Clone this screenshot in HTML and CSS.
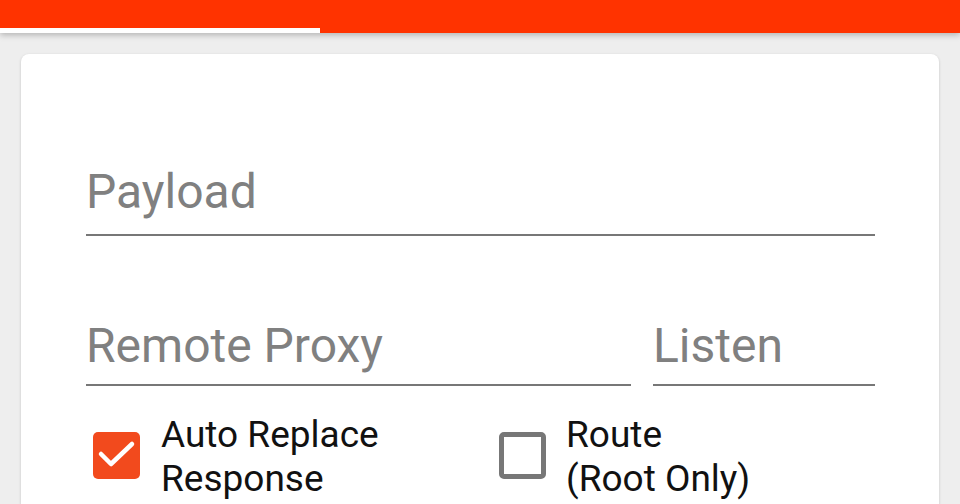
FILE: index.html
```html
<!DOCTYPE html>
<html lang="en">
<head>
  <meta charset="UTF-8" />
  <meta name="viewport" content="width=device-width, initial-scale=1.0"/>
  <title>Proxy Settings</title>
  <link rel="stylesheet" href="styles.css">
</head>
<body>
  <div class="appbar">
    <div class="tab-indicator"></div>
  </div>

  <div class="card">
    <div class="field field-payload">Payload</div>

    <div class="field-row">
      <div class="field field-small">Remote Proxy</div>
      <div class="field field-small">Listen</div>
    </div>

    <div class="checks">
      <div class="check">
        <span class="box checked">
          <svg width="47" height="47" viewBox="0 0 47 47">
            <path d="M8 22 L18 32 L39 12" fill="none" stroke="#fff" stroke-width="4.5" stroke-linecap="round" stroke-linejoin="round"/>
          </svg>
        </span>
        <span class="check-label">Auto Replace<br>Response</span>
      </div>
      <div class="check">
        <span class="box"></span>
        <span class="check-label">Route<br>(Root Only)</span>
      </div>
    </div>
  </div>
</body>
</html>
```

FILE: styles.css
```css
body {
  margin: 0;
  height: 504px;
  background: #eeeeee;
  font-family: Roboto, 'Noto Sans', sans-serif;
  overflow: hidden;
}
.appbar {
  height: 33px;
  background: #ff3300;
  display: flex;
  align-items: flex-end;
  box-shadow: 0 2px 6px rgba(0, 0, 0, 0.25);
}
.tab-indicator {
  width: 320px;
  height: 5px;
  background: #fff;
}
.card {
  margin: 21px 21px 0;
  height: 450px;
  box-sizing: border-box;
  background: #fff;
  border-radius: 8px 8px 0 0;
  box-shadow: 0 1px 3px rgba(0, 0, 0, 0.18);
  padding: 110px 64px 0 65px;
}
.field {
  color: #808080;
  font-size: 48px;
  line-height: 56px;
  border-bottom: 2px solid #777;
}
.field-payload {
  padding-bottom: 14px;
}
.field-row {
  margin-top: 82px;
  display: grid;
  grid-template-columns: 545px 1fr;
  gap: 22px;
}
.field-small {
  padding-bottom: 10px;
}
.checks {
  margin-top: 27px;
  display: grid;
  grid-template-columns: 406px 1fr;
}
.check {
  display: flex;
  align-items: flex-start;
}
.box {
  width: 47px;
  height: 47px;
  box-sizing: border-box;
  margin: 19px 0 0 7px;
  border: 5px solid #777;
  border-radius: 5px;
  flex-shrink: 0;
}
.box.checked {
  border: none;
  background: #f24a1d;
}
.box svg {
  display: block;
}
.check-label {
  margin-left: 21px;
  color: #111;
  font-size: 37px;
  line-height: 44px;
}
.check + .check .check-label {
  margin-left: 20px;
}
```
